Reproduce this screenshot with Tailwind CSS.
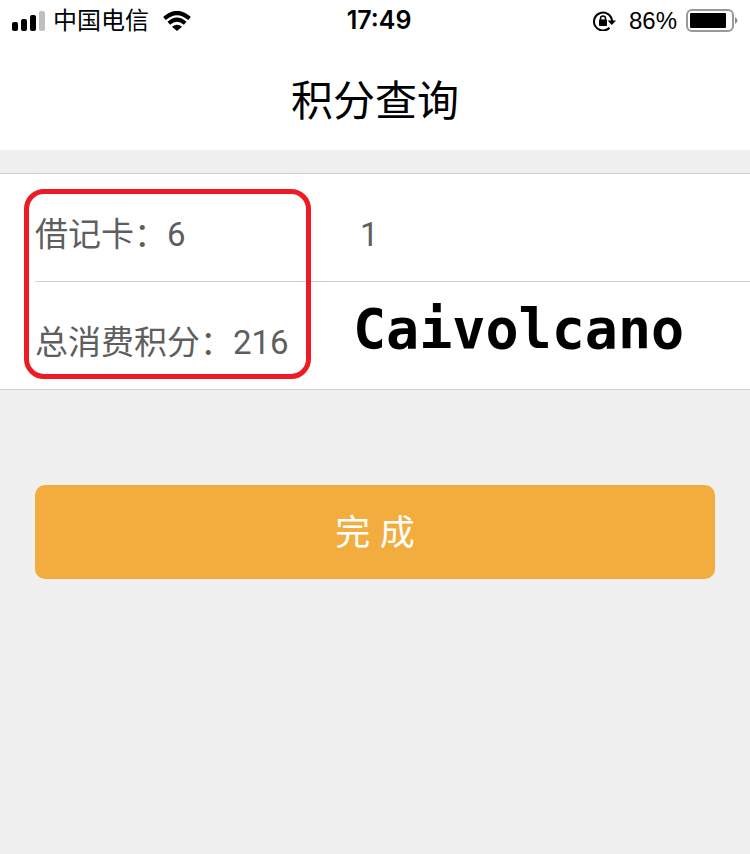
<!DOCTYPE html>
<html lang="zh-CN">
<head>
    <meta charset="UTF-8">
    <meta name="viewport" content="width=device-width, initial-scale=1.0">
    <title>积分查询</title>
    <script src="https://cdn.jsdelivr.net/npm/@tailwindcss/browser@4"></script>
</head>
<body class="bg-[#f0f0f0] min-h-screen font-['Liberation_Sans','Noto_Sans_CJK_SC',sans-serif]">

    <header class="bg-white">
        <!-- Status bar -->
        <div class="grid grid-cols-3 items-center h-10 pt-0.5 px-3 text-2xl text-black">
            <div class="flex items-center">
                <svg class="w-[33px] h-5 mr-2 shrink-0" viewBox="0 0 33 20">
                    <rect x="0" y="11" width="6" height="9" rx="2"/>
                    <rect x="9" y="8" width="6" height="12" rx="2"/>
                    <rect x="18" y="4" width="6" height="16" rx="2"/>
                    <rect x="27" y="0" width="6" height="20" rx="2" fill="#bfbfbf"/>
                </svg>
                <span class="whitespace-nowrap">中国电信</span>
                <svg class="w-7 h-5 ml-3.5 shrink-0" viewBox="0 0 28 20">
                    <path d="M1.500 7.500 Q14 -3.500 26.500 7.500" fill="none" stroke="#000" stroke-width="4.200"/>
                    <path d="M5.800 12.300 Q14 5 22.200 12.300" fill="none" stroke="#000" stroke-width="4"/>
                    <path d="M9 15.800 Q14 11.500 19 15.800 L14 20 Z"/>
                </svg>
            </div>
            <div class="pl-2 text-center text-[25px] font-semibold font-['Inter',sans-serif]">17:49</div>
            <div class="flex items-center justify-end">
                <svg class="w-6 h-5 mr-3 shrink-0" viewBox="0 0 24 20">
                    <path d="M16.500 16.800 A9 9 0 1 1 19 10" fill="none" stroke="#000" stroke-width="2"/>
                    <path d="M14.500 9.500 H23 L18.800 14 Z"/>
                    <rect x="6" y="8.500" width="8" height="6.500" rx="0.800"/>
                    <path d="M7.500 9 V7.500 A2.500 2.500 0 0 1 12.500 7.500 V9" fill="none" stroke="#000" stroke-width="1.500"/>
                </svg>
                <span>86%</span>
                <svg class="w-[53px] h-6 ml-2 shrink-0" viewBox="0 0 53 24">
                    <rect x="2" y="1" width="46" height="21" rx="5" fill="none" stroke="#999" stroke-width="2"/>
                    <rect x="5" y="4" width="36" height="15" rx="1"/>
                    <path d="M50 8 Q55 11.500 50 15 Z" fill="#888"/>
                </svg>
            </div>
        </div>
        <h1 class="h-[110px] pt-[34px] text-center text-[42px] leading-[56px] text-black">积分查询</h1>
    </header>

    <main>
        <!-- Points summary -->
        <section class="relative mt-[23px] border-y border-[#d0d0d0] bg-white pl-[35px] text-[33px] font-['Roboto','Noto_Sans_CJK_SC',sans-serif] text-[#5e5e5e]">
            <div class="flex h-[108px] items-center border-b border-[#d0d0d0] pt-3.5">
                <span class="w-[325px]">借记卡：6</span>
                <span>1</span>
            </div>
            <div class="flex h-[107px] items-center">
                <span class="w-[318px] pt-3.5">总消费积分：216</span>
                <span class="-mt-3 text-[55px] font-bold text-black font-['DejaVu_Sans_Mono',monospace]">Caivolcano</span>
            </div>
            <!-- Highlight frame -->
            <div class="absolute top-[15px] left-6 h-[190px] w-[287px] rounded-[20px] border-5 border-[#ed1c24]"></div>
        </section>

        <div class="px-[35px] pt-[95px]">
            <button type="button" class="h-[94px] w-full rounded-[10px] bg-[#f3ad3e] pt-0.5 text-[35px] text-white hover:bg-[#e9a234]">完 成</button>
        </div>
    </main>

</body>
</html>
